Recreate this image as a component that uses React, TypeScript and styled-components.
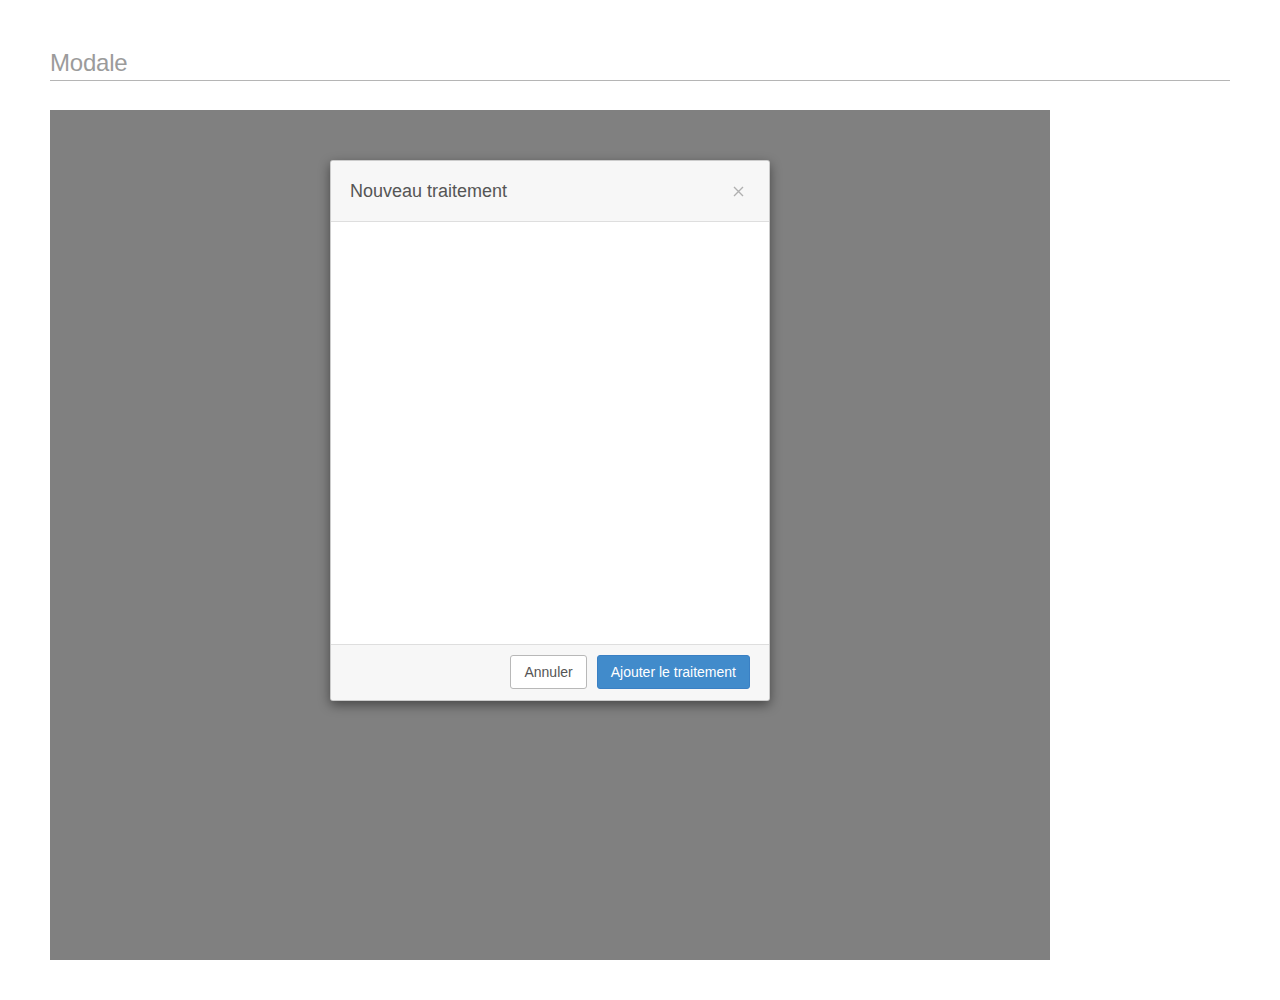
import React from "react";
import styled, { createGlobalStyle } from "styled-components";

const Global = createGlobalStyle`
  html, body { margin: 0; padding: 0; background: #fff; }
  body { font-family: "Liberation Sans", Arial, sans-serif; }
  * { box-sizing: border-box; }
`;

const Page = styled.div`
  padding: 49px 50px 40px;
`;

const Title = styled.h1`
  margin: 0;
  font-size: 24px;
  font-weight: 300;
  color: #9b9b9b;
  line-height: 28px;
  padding-bottom: 3px;
  border-bottom: 1px solid #b5b5b5;
  letter-spacing: -0.2px;
`;

const Backdrop = styled.div`
  margin-top: 29px;
  width: 1000px;
  height: 850px;
  background: #808080;
  display: flex;
  justify-content: center;
  align-items: flex-start;
  padding-top: 50px;
`;

const Modal = styled.div`
  width: 440px;
  background: #fff;
  border: 1px solid rgba(0, 0, 0, 0.2);
  border-radius: 3px;
  box-shadow: 0 4px 12px rgba(0, 0, 0, 0.45);
  display: flex;
  flex-direction: column;
  overflow: hidden;
`;

const Header = styled.div`
  height: 61px;
  background: #f7f7f7;
  border-bottom: 1px solid #dedede;
  display: flex;
  align-items: center;
  justify-content: space-between;
  padding: 0 25px 0 19px;
`;

const ModalTitle = styled.h2`
  margin: 0;
  font-size: 18px;
  font-weight: 400;
  color: #555;
`;

const Close = styled.button`
  border: 0;
  background: transparent;
  padding: 0;
  width: 12px;
  height: 12px;
  display: flex;
  align-items: center;
  justify-content: center;
  cursor: pointer;
`;

const Body = styled.div`
  height: 422px;
  background: #fff;
`;

const Footer = styled.div`
  height: 56px;
  background: #f7f7f7;
  border-top: 1px solid #dedede;
  display: flex;
  align-items: center;
  justify-content: flex-end;
  gap: 10px;
  padding: 0 19px 2px;
`;

const Button = styled.button<{ $primary?: boolean }>`
  height: 34px;
  padding: 0 13px;
  font-family: "Liberation Sans", Arial, sans-serif;
  font-size: 14px;
  border-radius: 3px;
  cursor: pointer;
  border: 1px solid ${(p) => (p.$primary ? "#3a80c4" : "#b8b8b8")};
  background: ${(p) => (p.$primary ? "#418bcb" : "#fff")};
  color: ${(p) => (p.$primary ? "#fff" : "#555")};
`;

export default function App() {
  return (
    <>
      <Global />
      <Page>
        <Title>Modale</Title>
        <Backdrop>
          <Modal>
            <Header>
              <ModalTitle>Nouveau traitement</ModalTitle>
              <Close aria-label="Fermer">
                <svg width="11" height="11" viewBox="0 0 11 11">
                  <path d="M1 1L10 10M10 1L1 10" stroke="#b0b0b0" strokeWidth="1.4" />
                </svg>
              </Close>
            </Header>
            <Body />
            <Footer>
              <Button>Annuler</Button>
              <Button $primary>Ajouter le traitement</Button>
            </Footer>
          </Modal>
        </Backdrop>
      </Page>
    </>
  );
}
